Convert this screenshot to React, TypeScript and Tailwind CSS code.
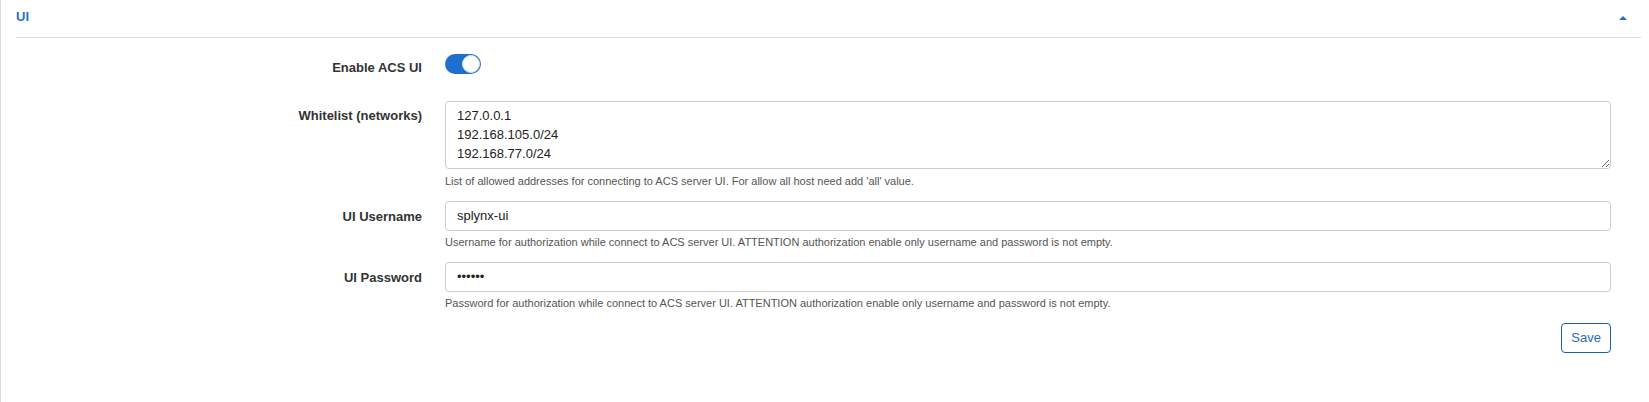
import React from "react";

const font = { fontFamily: '"Liberation Sans", Arial, sans-serif' };

function Label({ children, pt }: { children: React.ReactNode; pt: string }) {
  return (
    <div className={`w-[406px] shrink-0 text-right text-[13px] leading-[19px] font-bold text-[#333] ${pt}`}>
      {children}
    </div>
  );
}

export default function App() {
  return (
    <div className="w-[1649px] h-[402px] bg-white border-l border-[#dddddd] pl-[15px] pr-[8px]" style={font}>
      <div className="h-[38px] border-b border-[#dddddd] flex items-center justify-between pb-[3px]">
        <span className="text-[13px] font-bold text-[#1f73c7]">UI</span>
        <span className="mr-[14px] mt-[2px] w-0 h-0 border-l-[4px] border-r-[4px] border-b-[4px] border-l-transparent border-r-transparent border-b-[#1f73c7]" />
      </div>

      <div className="pr-[30px]">
        {/* Enable ACS UI */}
        <div className="flex gap-[23px] mt-[16px] h-[20px]">
          <Label pt="pt-[4px]">Enable ACS UI</Label>
          <div className="relative w-[36px] h-[20px] rounded-full bg-[#1f6fcc]">
            <div className="absolute right-[1px] top-[1px] w-[18px] h-[18px] rounded-full bg-white border border-[#d6e4f5]" />
          </div>
        </div>

        {/* Whitelist */}
        <div className="flex gap-[23px] mt-[27px]">
          <Label pt="pt-[5px]">Whitelist (networks)</Label>
          <div className="flex-1">
            <textarea
              className="block w-full h-[68px] resize-y border border-[#cccccc] rounded-[4px] px-[11px] pt-[4px] text-[13px] leading-[19px] text-[#222] outline-none"
              defaultValue={"127.0.0.1\n192.168.105.0/24\n192.168.77.0/24"}
              style={font}
            />
            <div className="mt-[4px] text-[11px] leading-[16px] text-[#555]">
              List of allowed addresses for connecting to ACS server UI. For allow all host need add 'all' value.
            </div>
          </div>
        </div>

        {/* Username */}
        <div className="flex gap-[23px] mt-[12px]">
          <Label pt="pt-[6px]">UI Username</Label>
          <div className="flex-1">
            <div className="h-[30px] border border-[#cccccc] rounded-[4px] px-[11px] flex items-center text-[13px] text-[#222]">
              splynx-ui
            </div>
            <div className="mt-[3px] text-[11px] leading-[16px] text-[#555]">
              Username for authorization while connect to ACS server UI. ATTENTION authorization enable only username and password is not empty.
            </div>
          </div>
        </div>

        {/* Password */}
        <div className="flex gap-[23px] mt-[12px]">
          <Label pt="pt-[6px]">UI Password</Label>
          <div className="flex-1">
            <div className="h-[30px] border border-[#cccccc] rounded-[4px] px-[11px] flex items-center text-[13px] text-[#222]">
              ••••••
            </div>
            <div className="mt-[3px] text-[11px] leading-[16px] text-[#555]">
              Password for authorization while connect to ACS server UI. ATTENTION authorization enable only username and password is not empty.
            </div>
          </div>
        </div>

        <div className="flex justify-end mt-[12px]">
          <button className="h-[30px] px-[9px] border border-[#1c5ea8] rounded-[4px] text-[13px] text-[#2a6db5] bg-white" style={font}>
            Save
          </button>
        </div>
      </div>
    </div>
  );
}
